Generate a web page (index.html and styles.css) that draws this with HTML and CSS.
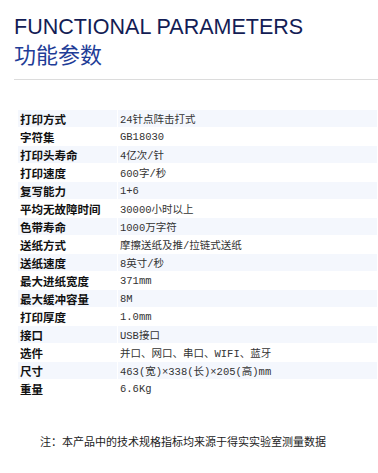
FILE: index.html
```html
<!DOCTYPE html>
<html lang="zh-CN">
<head>
<meta charset="utf-8">
<title>功能参数</title>
<link rel="stylesheet" href="styles.css">
</head>
<body>
<div class="page">
  <header class="head">
    <h1 class="title-en">FUNCTIONAL PARAMETERS</h1>
    <h2 class="title-cn">功能参数</h2>
  </header>
  <div class="rule"></div>
  <div class="specs">
    <div class="row alt"><div class="k">打印方式</div><div class="v">24针点阵击打式</div></div>
    <div class="row"><div class="k">字符集</div><div class="v">GB18030</div></div>
    <div class="row alt"><div class="k">打印头寿命</div><div class="v">4亿次/针</div></div>
    <div class="row"><div class="k">打印速度</div><div class="v">600字/秒</div></div>
    <div class="row alt"><div class="k">复写能力</div><div class="v">1+6</div></div>
    <div class="row"><div class="k">平均无故障时间</div><div class="v">30000小时以上</div></div>
    <div class="row alt"><div class="k">色带寿命</div><div class="v">1000万字符</div></div>
    <div class="row"><div class="k">送纸方式</div><div class="v">摩擦送纸及推/拉链式送纸</div></div>
    <div class="row alt"><div class="k">送纸速度</div><div class="v">8英寸/秒</div></div>
    <div class="row"><div class="k">最大进纸宽度</div><div class="v">371mm</div></div>
    <div class="row alt"><div class="k">最大缓冲容量</div><div class="v">8M</div></div>
    <div class="row"><div class="k">打印厚度</div><div class="v">1.0mm</div></div>
    <div class="row alt"><div class="k">接口</div><div class="v">USB接口</div></div>
    <div class="row"><div class="k">选件</div><div class="v">并口、网口、串口、WIFI、蓝牙</div></div>
    <div class="row alt"><div class="k">尺寸</div><div class="v">463(宽)×338(长)×205(高)mm</div></div>
    <div class="row"><div class="k">重量</div><div class="v">6.6Kg</div></div>
  </div>
  <p class="note">注：本产品中的技术规格指标均来源于得实实验室测量数据</p>
</div>
</body>
</html>
```

FILE: styles.css
```css
html, body {
  margin: 0;
  padding: 0;
  background: #ffffff;
}
.page {
  padding: 15px 0 0 14px;
}
.head {
  display: flex;
  flex-direction: column;
}
.title-en {
  margin: 0;
  font-family: "Liberation Sans", Arial, sans-serif;
  font-weight: normal;
  font-size: 21.5px;
  line-height: 24px;
  color: #131d55;
}
.title-cn {
  margin: 0;
  font-family: "Noto Sans CJK SC", sans-serif;
  font-weight: normal;
  font-size: 22px;
  line-height: 28px;
  color: #1f3d97;
}
.rule {
  height: 1px;
  background: #dcdcdc;
  margin-top: 12px;
}
.specs {
  margin: 30px 1px 0 4px;
  display: flex;
  flex-direction: column;
  gap: 1px;
}
.row {
  display: grid;
  grid-template-columns: 99px 1fr;
  column-gap: 1px;
  height: 17px;
}
.row.alt .k,
.row.alt .v {
  background: #f4f7fd;
}
.k, .v {
  display: flex;
  align-items: center;
  padding-left: 2px;
  white-space: nowrap;
}
.k {
  font-family: "Noto Sans CJK SC", sans-serif;
  font-weight: bold;
  font-size: 11.5px;
  color: #111111;
}
.v {
  font-family: "Liberation Mono", "Noto Sans CJK SC", monospace;
  font-size: 10.5px;
  color: #333333;
}
.note {
  margin: 36px 0 0 26px;
  font-family: "Noto Sans CJK SC", sans-serif;
  font-size: 11px;
  line-height: 16px;
  color: #222222;
}
```
